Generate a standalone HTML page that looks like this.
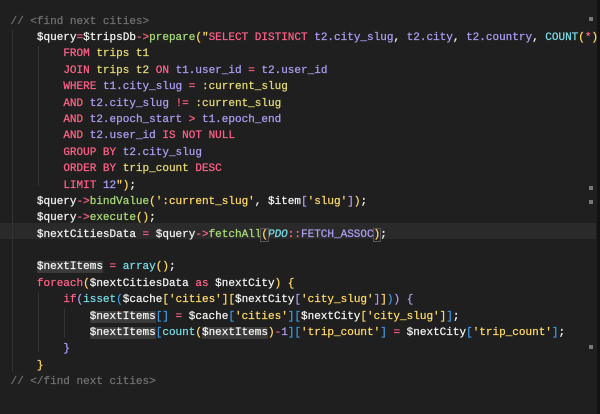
<!DOCTYPE html>
<html><head><meta charset="utf-8"><style>
html,body{margin:0;padding:0;background:#1f1f1f;width:600px;height:414px;overflow:hidden}
.ed{position:absolute;left:0;top:13.6px;font-family:"Liberation Mono",monospace;font-size:11px;line-height:16.4px;color:#f2f2f0;-webkit-text-stroke:0.25px currentColor}
.l{height:16.4px;padding-left:10.5px;white-space:pre}
.k{color:#ff6188}.p{color:#ab9df2}.y{color:#ffd866}.g{color:#a9dc76}.c{color:#78dce8}.cm{color:#727072}.kh{color:#e6db74}.b{color:#3d9be0}.i{color:#78dce8;font-style:italic}
.hl{background:#3a3a3a}
.cur{position:absolute;left:0;width:596px;top:222.8px;height:16.4px;background:#2a2a2a}
.g1{position:absolute;left:12px;top:30px;width:1px;height:342px;background:#333}
.g2{position:absolute;left:38px;top:46px;width:1px;height:140px;background:#333}
.g3{position:absolute;left:38px;top:292px;width:1px;height:60px;background:#333}
.g4{position:absolute;left:64px;top:308px;width:1px;height:30px;background:#333}
.sb{position:absolute;right:0;top:0;width:3px;height:414px;background:#121212}
.m{position:absolute;left:589px;width:4px;height:4px;background:#777}
</style></head><body>
<div class="cur"></div>
<div class="g1"></div><div class="g2"></div><div class="g3"></div><div class="g4"></div>
<div class="sb"></div>
<div class="m" style="top:17px"></div><div class="m" style="top:186px"></div><div class="m" style="top:200px"></div><div class="m" style="top:345px"></div>
<div class="ed">
<div class="l"><span class="cm">// &lt;find next cities&gt;</span></div>
<div class="l">    $query<span class="k">=</span>$tripsDb<span class="k">-&gt;</span><span class="g">prepare</span><span class="y">(</span><span class="y">"</span><span class="k">SELECT DISTINCT</span> <span class="p">t2.city_slug</span>, <span class="p">t2.city</span>, <span class="p">t2.country</span>, <span class="c">COUNT</span><span class="y">(</span><span class="k">*</span><span class="y">)</span></div>
<div class="l">        <span class="k">FROM</span> <span class="kh">trips t1</span></div>
<div class="l">        <span class="k">JOIN</span> <span class="kh">trips t2</span> <span class="k">ON</span> <span class="p">t1.user_id</span> <span class="k">=</span> <span class="p">t2.user_id</span></div>
<div class="l">        <span class="k">WHERE</span> <span class="p">t1.city_slug</span> <span class="k">=</span> <span class="kh">:current_slug</span></div>
<div class="l">        <span class="k">AND</span> <span class="p">t2.city_slug</span> <span class="k">!=</span> <span class="kh">:current_slug</span></div>
<div class="l">        <span class="k">AND</span> <span class="p">t2.epoch_start</span> <span class="k">&gt;</span> <span class="p">t1.epoch_end</span></div>
<div class="l">        <span class="k">AND</span> <span class="p">t2.user_id</span> <span class="k">IS NOT NULL</span></div>
<div class="l">        <span class="k">GROUP BY</span> <span class="p">t2.city_slug</span></div>
<div class="l">        <span class="k">ORDER BY</span> <span class="kh">trip_count</span> <span class="k">DESC</span></div>
<div class="l">        <span class="k">LIMIT</span> <span class="p">12</span><span class="y">")</span>;</div>
<div class="l">    $query<span class="k">-&gt;</span><span class="g">bindValue</span><span class="y">(</span><span class="y">':current_slug'</span>, $item<span class="p">[</span><span class="y">'slug'</span><span class="p">]</span><span class="y">)</span>;</div>
<div class="l">    $query<span class="k">-&gt;</span><span class="g">execute</span><span class="y">()</span>;</div>
<div class="l">    $nextCitiesData <span class="k">=</span> $query<span class="k">-&gt;</span><span class="g">fetchAll</span><span class="y" style="outline:1px solid #555">(</span><span class="i">PDO</span><span class="k">::</span><span class="p">FETCH_ASSOC</span><span class="y" style="outline:1px solid #555">)</span>;</div>
<div class="l"> </div>
<div class="l">    <span class="hl">$nextItems</span> <span class="k">=</span> <span class="c">array</span><span class="y">()</span>;</div>
<div class="l">    <span class="k">foreach</span><span class="y">(</span>$nextCitiesData <span class="k">as</span> $nextCity<span class="y">)</span> <span class="y">{</span></div>
<div class="l">        <span class="k">if</span><span class="p">(</span><span class="c">isset</span><span class="b">(</span>$cache<span class="y">[</span><span class="y">'cities'</span><span class="y">][</span>$nextCity<span class="p">[</span><span class="y">'city_slug'</span><span class="p">]</span><span class="y">]</span><span class="b">)</span><span class="p">)</span> <span class="p">{</span></div>
<div class="l">            <span class="hl">$nextItems</span><span class="b">[]</span> <span class="k">=</span> $cache<span class="b">[</span><span class="y">'cities'</span><span class="b">][</span>$nextCity<span class="y">[</span><span class="y">'city_slug'</span><span class="y">]</span><span class="b">]</span>;</div>
<div class="l">            <span class="hl">$nextItems</span><span class="b">[</span><span class="c">count</span><span class="y">(</span><span class="hl">$nextItems</span><span class="y">)</span><span class="k">-</span><span class="p">1</span><span class="b">][</span><span class="y">'trip_count'</span><span class="b">]</span> <span class="k">=</span> $nextCity<span class="b">[</span><span class="y">'trip_count'</span><span class="b">]</span>;</div>
<div class="l">        <span class="p">}</span></div>
<div class="l">    <span class="y">}</span></div>
<div class="l"><span class="cm">// &lt;/find next cities&gt;</span></div>
</div>
</body></html>
